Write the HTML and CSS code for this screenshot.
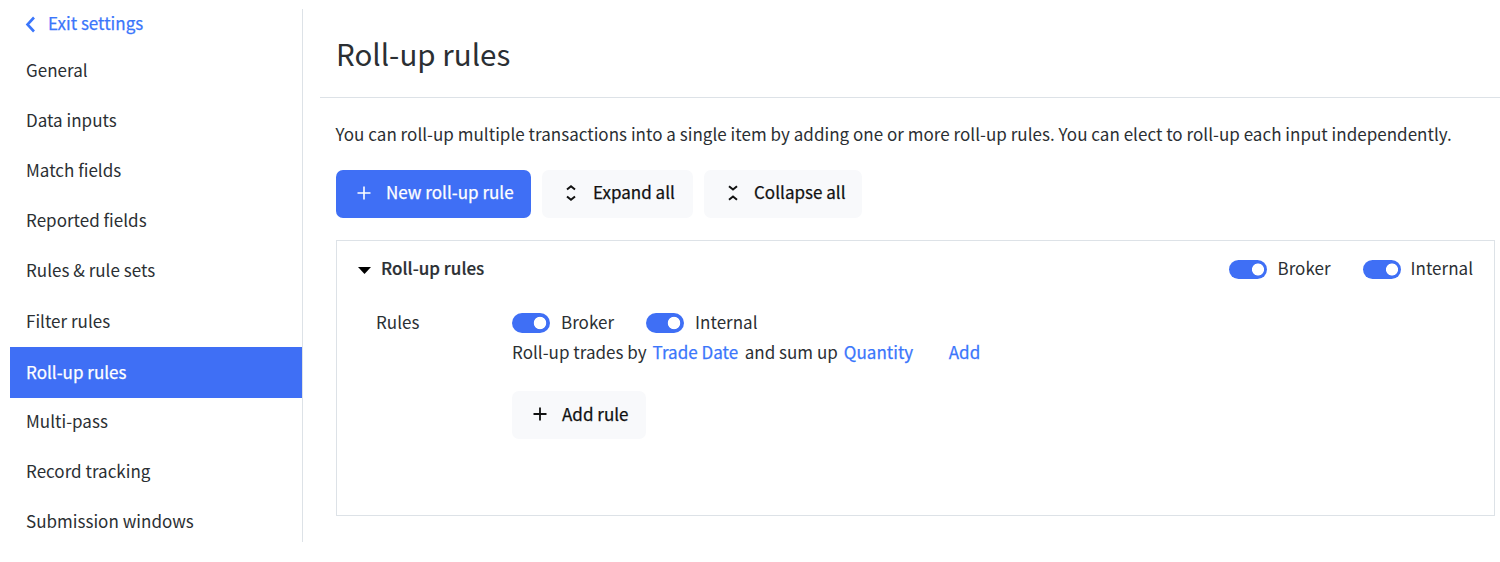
FILE: index.html
```html
<!DOCTYPE html>
<html lang="en">
<head>
    <meta charset="UTF-8">
    <meta name="viewport" content="width=device-width, initial-scale=1.0">
    <title>Roll-up rules</title>
    <link rel="stylesheet" href="styles.css">
</head>
<body>
    <nav class="sidebar">
        <a href="#" class="exit">
            <svg width="11" height="17" viewBox="0 0 11 17"><path d="M9 1.5 L2.5 8.5 L9 15.5" fill="none" stroke="currentColor" stroke-width="2.6"/></svg>
            <span>Exit settings</span>
        </a>
        <ul class="menu">
            <li><a href="#">General</a></li>
            <li><a href="#">Data inputs</a></li>
            <li><a href="#">Match fields</a></li>
            <li><a href="#">Reported fields</a></li>
            <li><a href="#">Rules &amp; rule sets</a></li>
            <li><a href="#">Filter rules</a></li>
            <li><a href="#" class="active">Roll-up rules</a></li>
            <li><a href="#">Multi-pass</a></li>
            <li><a href="#">Record tracking</a></li>
            <li><a href="#">Submission windows</a></li>
        </ul>
    </nav>

    <main class="main">
        <header class="header">
            <h1>Roll-up rules</h1>
        </header>

        <div class="content">
            <p class="intro">You can roll-up multiple transactions into a single item by adding one or more roll-up rules. You can elect to roll-up each input independently.</p>

            <div class="toolbar">
                <button class="btn primary">
                    <svg width="14" height="14" viewBox="0 0 14 14"><path d="M7 0.5V13.5M0.5 7H13.5" stroke="currentColor" stroke-width="1.6"/></svg>
                    <span>New roll-up rule</span>
                </button>
                <button class="btn expand">
                    <svg width="10" height="18" viewBox="0 0 10 18"><path d="M1 5.5L5 2.2L9 5.5M1 12.5L5 15.8L9 12.5" fill="none" stroke="currentColor" stroke-width="2"/></svg>
                    <span>Expand all</span>
                </button>
                <button class="btn collapse">
                    <svg width="10" height="18" viewBox="0 0 10 18"><path d="M1 2.2L5 5.5L9 2.2M1 15.8L5 12.5L9 15.8" fill="none" stroke="currentColor" stroke-width="2"/></svg>
                    <span>Collapse all</span>
                </button>
            </div>

            <section class="panel">
                <div class="panel-header">
                    <svg class="caret" width="13" height="7" viewBox="0 0 13 7"><path d="M0 0H13L6.5 7Z" fill="#000"/></svg>
                    <h2>Roll-up rules</h2>
                    <div class="toggles">
                        <label class="toggle"><span class="switch"></span>Broker</label>
                        <label class="toggle"><span class="switch"></span>Internal</label>
                    </div>
                </div>
                <div class="panel-body">
                    <div class="label">Rules</div>
                    <div class="rules">
                        <div class="toggles">
                            <label class="toggle"><span class="switch"></span>Broker</label>
                            <label class="toggle"><span class="switch"></span>Internal</label>
                        </div>
                        <div class="rule">
                            <span>Roll-up trades by</span>
                            <a href="#" class="field">Trade Date</a>
                            <span>and sum up</span>
                            <a href="#" class="field">Quantity</a>
                            <a href="#" class="add">Add</a>
                        </div>
                        <button class="btn add-rule">
                            <svg width="14" height="14" viewBox="0 0 14 14"><path d="M7 0.5V13.5M0.5 7H13.5" stroke="currentColor" stroke-width="1.8"/></svg>
                            <span>Add rule</span>
                        </button>
                    </div>
                </div>
            </section>
        </div>
    </main>
</body>
</html>
```
FILE: styles.css
```css
:root {
    --blue: #3f6ff5;
    --link: #3b76fb;
    --text: #2b2f33;
    --border: #dde2e7;
    --light: #f8f9fb;
}

* {
    box-sizing: border-box;
}

body {
    margin: 0;
    height: 562px;
    display: flex;
    align-items: flex-start;
    font-family: "Noto Sans CJK SC", "Open Sans", sans-serif;
    font-size: 17px;
    line-height: 30px;
    letter-spacing: 0.02px;
    color: var(--text);
    background: #fff;
    overflow: hidden;
    white-space: nowrap;
}

a {
    color: var(--link);
    text-decoration: none;
}

/* a touch heavier than regular, same widths */
.exit,
.btn,
.field,
.add,
.menu .active {
    -webkit-text-stroke: 0.25px currentColor;
}

.sidebar {
    width: 293px;
    height: 533px;
    margin: 9px 0 0 10px;
    border-right: 1px solid var(--border);
}

.exit {
    display: flex;
    align-items: center;
    gap: 12px;
    height: 30px;
    padding-left: 15px;
}

.exit svg {
    margin-top: 1px;
}

.exit span {
    margin-top: -2px;
}

.menu {
    margin: 7px 0 0;
    padding: 0;
    list-style: none;
}

.menu a {
    display: block;
    height: 50.12px;
    padding-left: 16px;
    line-height: 47.6px;
    color: var(--text);
}

.menu .active {
    height: 51px;
    margin-bottom: -0.88px;
    line-height: 50px;
    color: #fff;
    background: var(--blue);
}

.main {
    flex: 1;
    margin-left: 17px;
}

.header {
    height: 98px;
    padding: 29px 0 0 16px;
    border-bottom: 1px solid var(--border);
}

h1 {
    margin: 0;
    font-size: 29.5px;
    font-weight: 400;
    line-height: 48px;
}

.content {
    padding: 21px 5px 0 16px;
}

.intro {
    margin: 0 0 21px -0.5px;
    letter-spacing: 0.026px;
}

.toolbar {
    display: flex;
    gap: 11px;
}

.btn {
    display: flex;
    align-items: center;
    gap: 15px;
    height: 48px;
    padding: 0 0 3px 21px;
    border: 0;
    border-radius: 7px;
    font: inherit;
    letter-spacing: 0.02px;
    color: #111;
    background: var(--light);
}

.toolbar .btn span {
    margin-top: -2px;
}

.btn.primary {
    width: 195px;
    color: #fff;
    background: var(--blue);
}

.btn.expand {
    width: 151px;
    gap: 17px;
    padding-left: 24px;
}

.btn.collapse {
    width: 158px;
    gap: 16px;
    padding-left: 24px;
}

.panel {
    height: 276px;
    margin-top: 22px;
    padding: 12px 21px 0 21px;
    border: 1px solid var(--border);
}

.panel-header {
    display: flex;
    align-items: center;
}

.caret {
    margin-top: 4px;
}

h2 {
    margin: 0 auto 0 10px;
    font-size: inherit;
    font-weight: 500;
    -webkit-text-stroke: 0.2px currentColor;
}

.toggles {
    display: flex;
    gap: 32px;
}

.toggle {
    display: flex;
    align-items: center;
    gap: 10px;
}

.switch {
    width: 38px;
    height: 19px;
    margin-top: 3px;
    border-radius: 10px;
    background: radial-gradient(circle at 29px 50%, #fff 5.6px, var(--blue) 6.4px);
}

.panel-body {
    display: flex;
    margin-top: 24px;
    padding-left: 18px;
}

.panel-body .toggle {
    gap: 11px;
}

.panel-body .switch {
    height: 20px;
    margin-top: 2px;
    background: radial-gradient(circle at 28px 50%, #fff 5.8px, var(--blue) 6.6px);
}

.label {
    width: 136px;
}

.rule {
    display: flex;
}

.field {
    margin: 0 6.5px 0 6px;
}

.add {
    margin-left: 29px;
}

.add-rule {
    width: 134px;
    margin-top: 24px;
}
```
